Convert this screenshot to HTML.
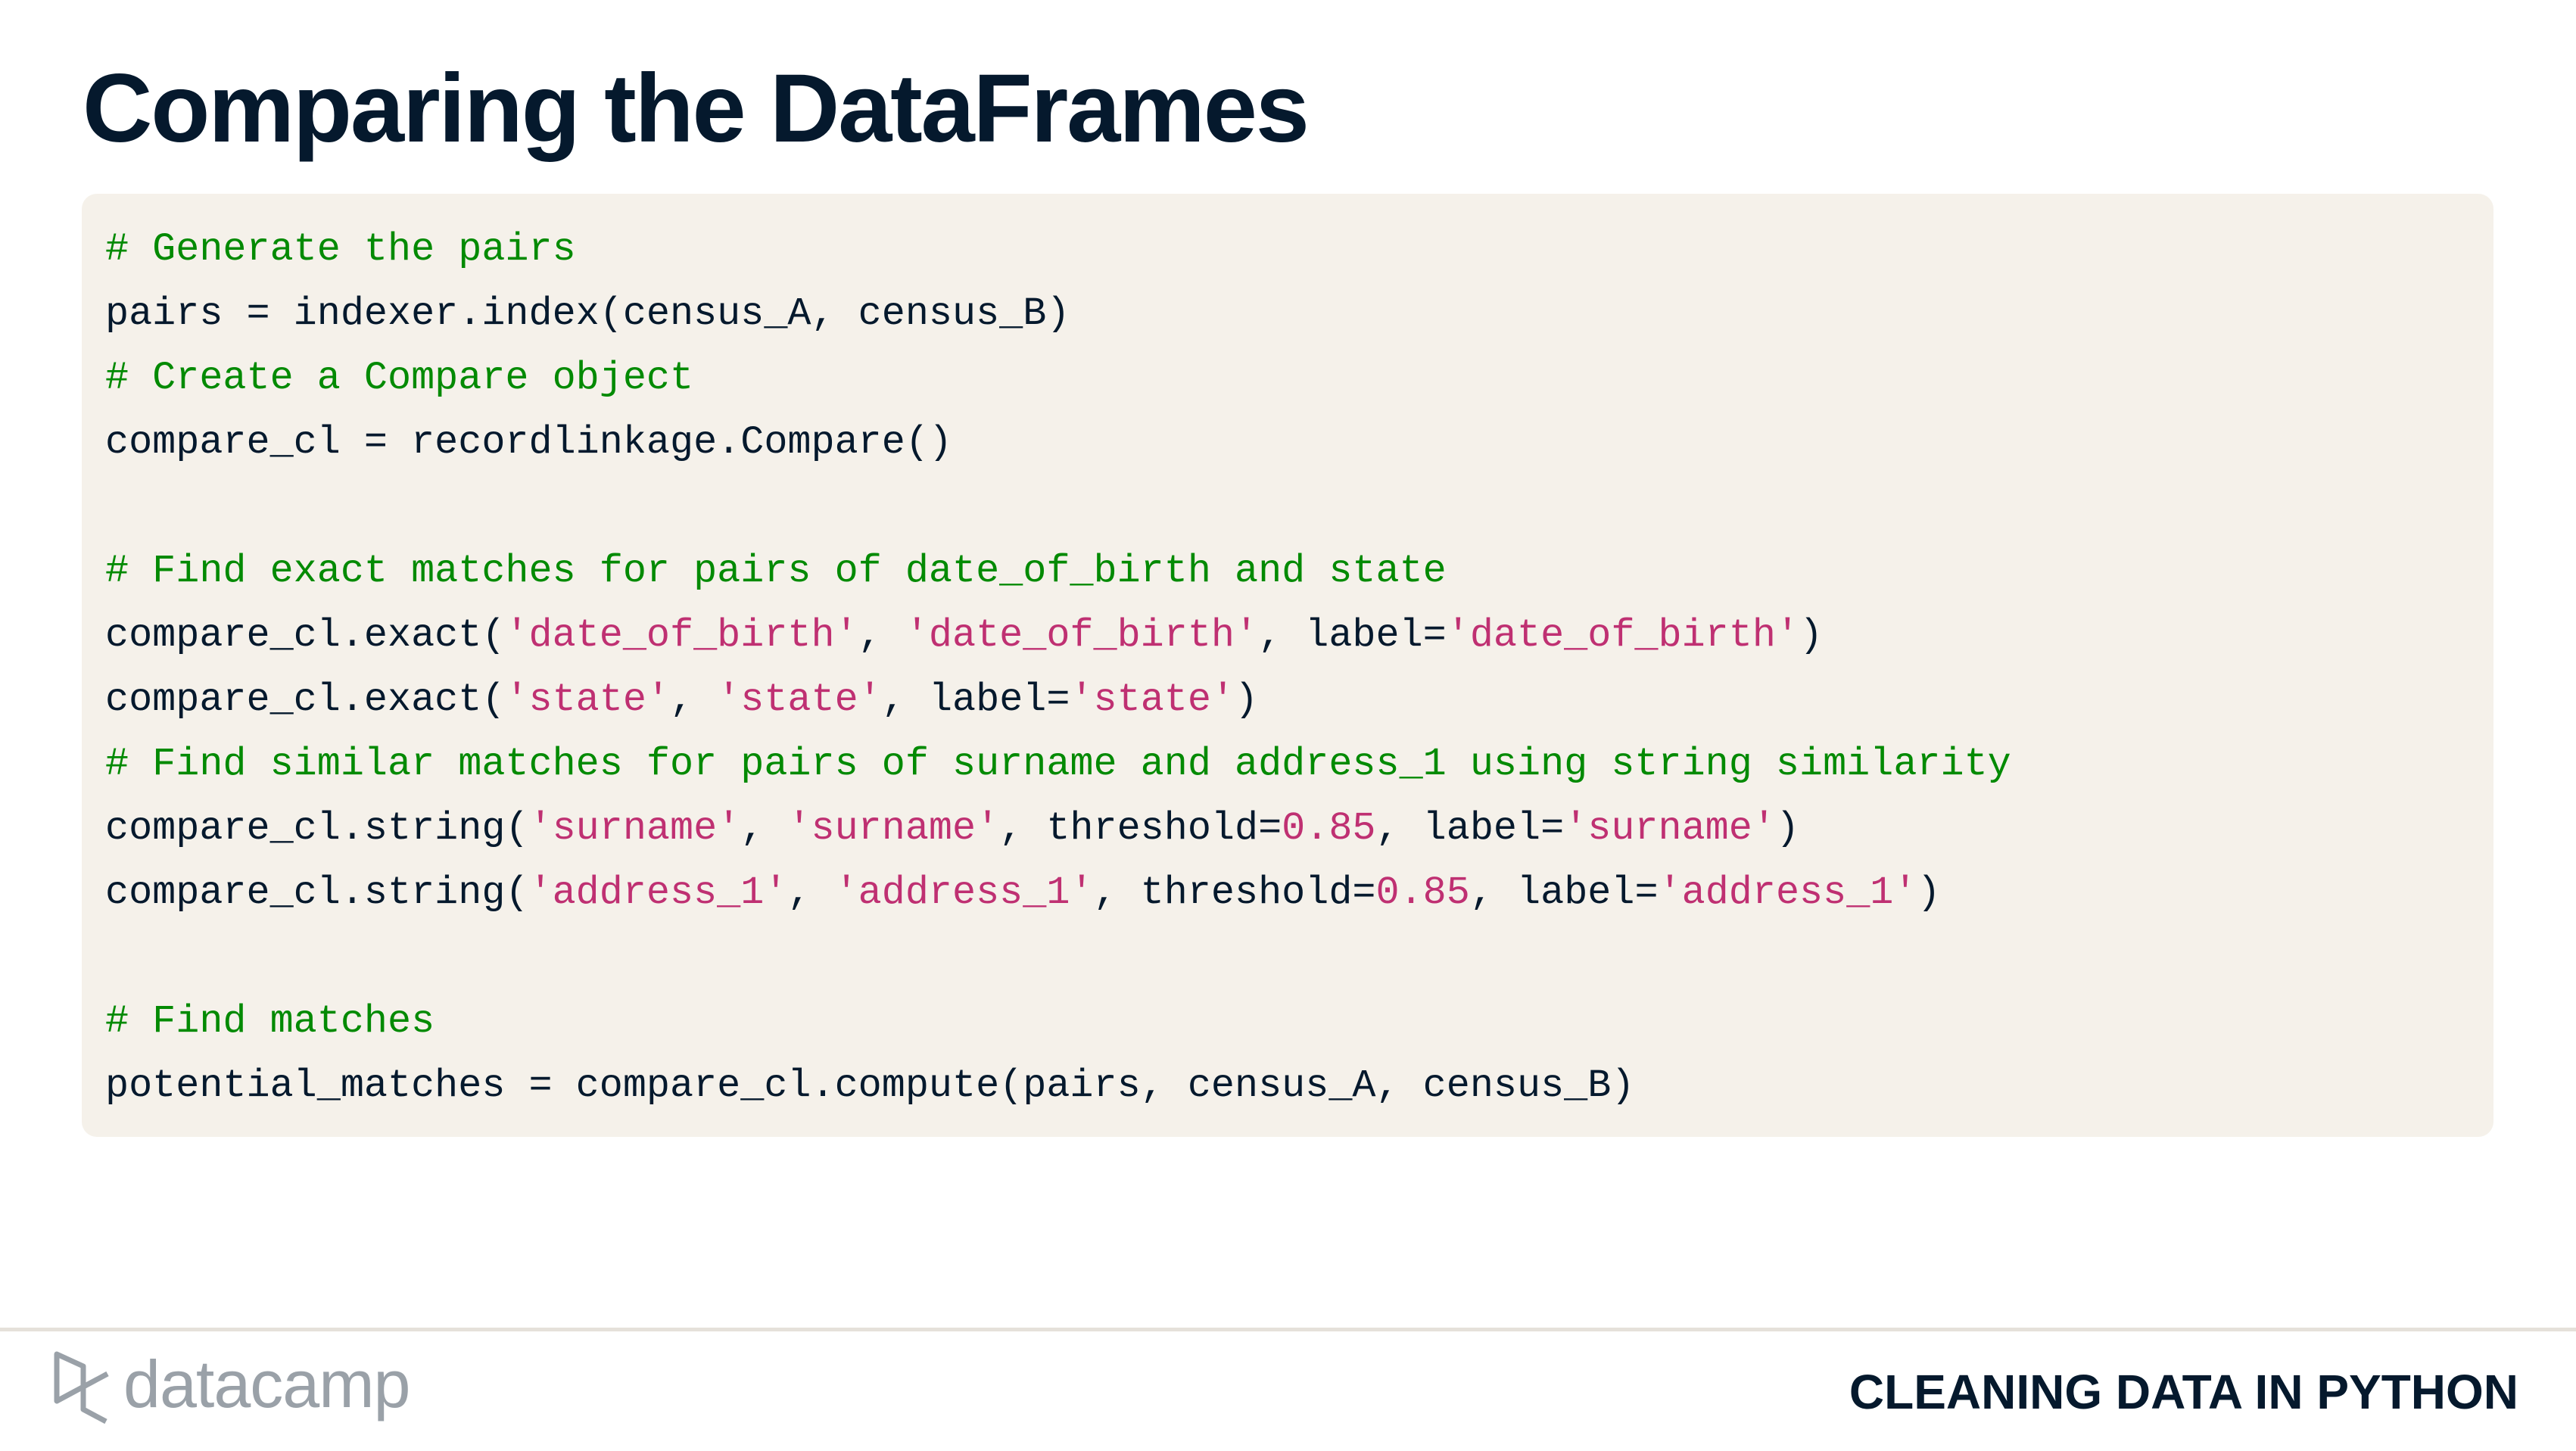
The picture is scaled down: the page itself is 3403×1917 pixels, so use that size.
<!DOCTYPE html>
<html><head><meta charset="utf-8"><style>
html,body{margin:0;padding:0;width:3403px;height:1917px;background:#fff;overflow:hidden;position:relative}
.title{position:absolute;left:109px;top:70px;font:bold 128px "Liberation Sans",sans-serif;color:#05192d;letter-spacing:-2.2px;white-space:nowrap}
.code{position:absolute;left:108px;top:256px;width:3186px;height:1246px;background:#f5f1ea;border-radius:20px}
pre{position:absolute;left:139px;top:287px;margin:0;font:51.8px/85px "Liberation Mono",monospace;color:#05192d}
.c{color:#038a03}.s{color:#bf3072}
.rule{position:absolute;left:0;top:1754px;width:3403px;height:5px;background:#e5e1da}
.brand{position:absolute;left:163px;top:1778px;font:88px "Liberation Sans",sans-serif;color:#9aa1a8;letter-spacing:-1px}
.course{position:absolute;right:76px;top:1802px;font:bold 64px "Liberation Sans",sans-serif;color:#05192d;white-space:nowrap}
</style></head><body>
<div class="title">Comparing the DataFrames</div>
<div class="code"></div>
<pre><span class="c"># Generate the pairs</span>
pairs = indexer.index(census_A, census_B)
<span class="c"># Create a Compare object</span>
compare_cl = recordlinkage.Compare()

<span class="c"># Find exact matches for pairs of date_of_birth and state</span>
compare_cl.exact(<span class="s">'date_of_birth'</span>, <span class="s">'date_of_birth'</span>, label=<span class="s">'date_of_birth'</span>)
compare_cl.exact(<span class="s">'state'</span>, <span class="s">'state'</span>, label=<span class="s">'state'</span>)
<span class="c"># Find similar matches for pairs of surname and address_1 using string similarity</span>
compare_cl.string(<span class="s">'surname'</span>, <span class="s">'surname'</span>, threshold=<span class="s">0.85</span>, label=<span class="s">'surname'</span>)
compare_cl.string(<span class="s">'address_1'</span>, <span class="s">'address_1'</span>, threshold=<span class="s">0.85</span>, label=<span class="s">'address_1'</span>)

<span class="c"># Find matches</span>
potential_matches = compare_cl.compute(pairs, census_A, census_B)</pre>
<div class="rule"></div>
<svg style="position:absolute;left:0;top:0" width="200" height="1917"><polyline points="142,1815 75,1851 75,1789 110,1805 110,1862 140,1878" fill="none" stroke="#9aa1a8" stroke-width="7" stroke-linejoin="round"/></svg>
<div class="brand">datacamp</div>
<div class="course">CLEANING DATA IN PYTHON</div>
</body></html>
